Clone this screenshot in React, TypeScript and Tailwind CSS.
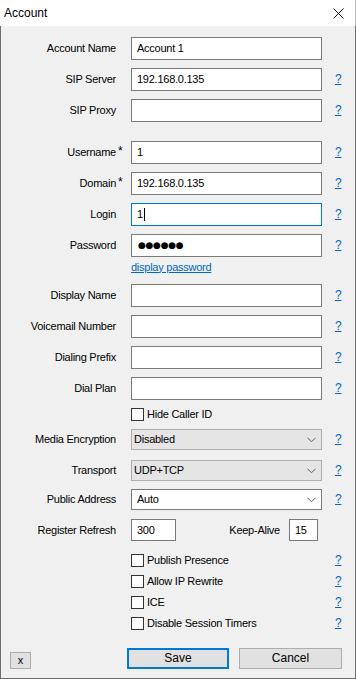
import React from 'react';

type RowProps = {
  label?: string;
  star?: boolean;
  help?: boolean;
  className: string;
  children?: React.ReactNode;
};

const Row: React.FC<RowProps> = ({ label, star, help, className, children }) => (
  <div className={`grid grid-cols-[115px_15px_191px_13px_auto] items-center ${className}`}>
    <span className="text-right whitespace-nowrap">{label}</span>
    <span className="pl-[2px] text-[12px] leading-[10px] self-start pt-[5px]">{star ? '*' : ''}</span>
    <div className="h-full">{children}</div>
    <span />
    {help ? <span className="text-[#0066cc] underline text-[12px]">?</span> : <span />}
  </div>
);

const TextBox: React.FC<{ value?: string; focused?: boolean; className?: string }> = ({ value, focused, className }) => (
  <div
    className={`h-full bg-white border flex items-center pl-[5px] whitespace-nowrap ${
      focused ? 'border-[#0078d7]' : 'border-[#7a7a7a]'
    } ${className ?? ''}`}
  >
    {value}
    {focused && <span className="ml-[1px] w-[1px] h-[13px] bg-black" />}
  </div>
);

const Chevron = () => (
  <svg width="9" height="6" viewBox="0 0 9 6" fill="none">
    <polyline points="0.5,0.8 4.5,4.8 8.5,0.8" stroke="#606060" strokeWidth="1" />
  </svg>
);

const Select: React.FC<{ value: string; enabled?: boolean }> = ({ value, enabled }) => (
  <div
    className={`h-full border flex items-center justify-between pr-[5px] ${
      enabled ? 'bg-white border-[#7a7a7a] pl-[5px]' : 'bg-[#e5e5e5] border-[#adadad] pl-[2px]'
    }`}
  >
    <span>{value}</span>
    <Chevron />
  </div>
);

const Check: React.FC<{ label: string }> = ({ label }) => (
  <div className="flex items-center gap-[3px] h-full whitespace-nowrap">
    <span className="w-[13px] h-[13px] border border-[#333333] bg-white shrink-0" />
    <span>{label}</span>
  </div>
);

export default function App() {
  return (
    <div className="w-[356px] h-[679px] flex flex-col font-['Liberation_Sans',Arial,sans-serif] text-black">
      <div className="h-[26px] bg-white flex items-center justify-between pl-[4px] pr-[11px] text-[12px] border-r border-[#bdbdbd]">
        <span>Account</span>
        <svg width="11" height="11" viewBox="0 0 11 11">
          <line x1="0.5" y1="0.5" x2="10.5" y2="10.5" stroke="#111" strokeWidth="1" />
          <line x1="10.5" y1="0.5" x2="0.5" y2="10.5" stroke="#111" strokeWidth="1" />
        </svg>
      </div>

      <div className="flex-1 bg-[#f0f0f0] border-l border-r border-b border-[#6e6e6e] flex flex-col pt-[11px] text-[11px] leading-[13px] tracking-[-0.25px]">
        <Row label="Account Name" className="h-[23px]">
          <TextBox value="Account 1" />
        </Row>
        <Row label="SIP Server" help className="h-[23px] mt-[8px]">
          <TextBox value="192.168.0.135" />
        </Row>
        <Row label="SIP Proxy" help className="h-[23px] mt-[8px]">
          <TextBox />
        </Row>

        <Row label="Username" star help className="h-[23px] mt-[19px]">
          <TextBox value="1" />
        </Row>
        <Row label="Domain" star help className="h-[23px] mt-[8px]">
          <TextBox value="192.168.0.135" />
        </Row>
        <Row label="Login" help className="h-[23px] mt-[8px]">
          <TextBox value="1" focused />
        </Row>
        <Row label="Password" help className="h-[23px] mt-[8px]">
          <div className="h-full bg-white border border-[#7a7a7a] flex items-center pl-[6px] font-['DejaVu_Sans',sans-serif] text-[9px] tracking-[-0.3px]">
            ●●●●●●
          </div>
        </Row>
        <Row className="h-[16px] mt-[2px]">
          <div className="h-full flex items-center">
            <span className="text-[#0066cc] underline">display password</span>
          </div>
        </Row>

        <Row label="Display Name" help className="h-[23px] mt-[9px]">
          <TextBox />
        </Row>
        <Row label="Voicemail Number" help className="h-[23px] mt-[8px]">
          <TextBox />
        </Row>
        <Row label="Dialing Prefix" help className="h-[23px] mt-[8px]">
          <TextBox />
        </Row>
        <Row label="Dial Plan" help className="h-[23px] mt-[8px]">
          <TextBox />
        </Row>
        <Row className="h-[13px] mt-[8px]">
          <Check label="Hide Caller ID" />
        </Row>

        <Row label="Media Encryption" help className="h-[21px] mt-[8px]">
          <Select value="Disabled" />
        </Row>
        <Row label="Transport" help className="h-[21px] mt-[10px]">
          <Select value="UDP+TCP" />
        </Row>
        <Row label="Public Address" help className="h-[21px] mt-[8px]">
          <Select value="Auto" enabled />
        </Row>
        <Row label="Register Refresh" className="h-[22px] mt-[9px]">
          <div className="h-full flex items-center">
            <TextBox value="300" className="w-[45px]" />
            <span className="flex-1 text-right pr-[9px]">Keep-Alive</span>
            <TextBox value="15" className="w-[29px] mr-[4px]" />
          </div>
        </Row>

        <Row help className="h-[13px] mt-[13px]">
          <Check label="Publish Presence" />
        </Row>
        <Row help className="h-[13px] mt-[8px]">
          <Check label="Allow IP Rewrite" />
        </Row>
        <Row help className="h-[13px] mt-[8px]">
          <Check label="ICE" />
        </Row>
        <Row help className="h-[13px] mt-[8px]">
          <Check label="Disable Session Timers" />
        </Row>

        <div className="h-[21px] mt-[18px] flex items-end pl-[9px] text-[12px] tracking-normal">
          <button className="w-[21px] h-[17px] bg-[#e1e1e1] border border-[#adadad] flex items-center justify-center leading-none text-[11px]">
            x
          </button>
          <button className="w-[102px] h-[21px] ml-[96px] bg-[#e1e1e1] border-2 border-[#0078d7] flex items-center justify-center">
            Save
          </button>
          <button className="w-[103px] h-[21px] ml-[10px] bg-[#e1e1e1] border border-[#adadad] flex items-center justify-center">
            Cancel
          </button>
        </div>
      </div>
    </div>
  );
}
